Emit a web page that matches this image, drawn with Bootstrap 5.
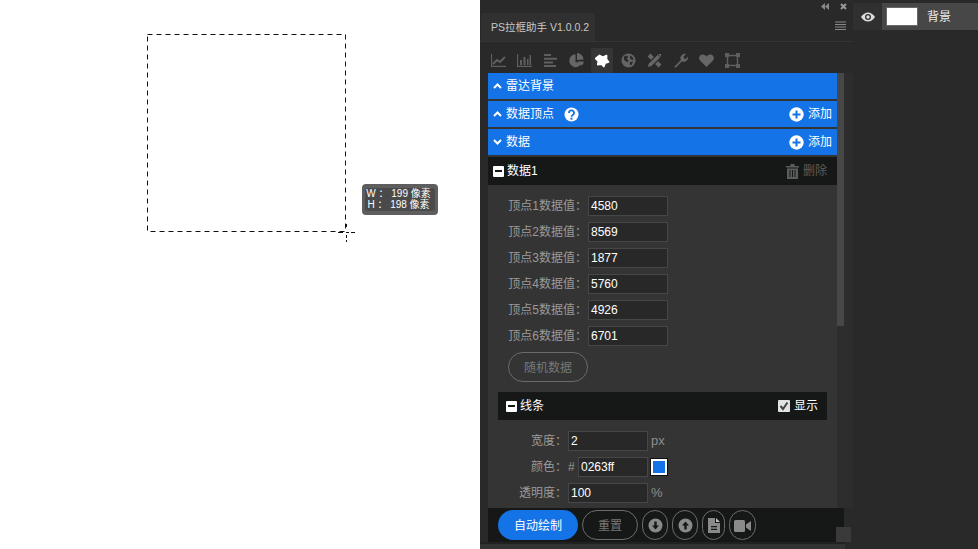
<!DOCTYPE html>
<html lang="zh">
<head>
<meta charset="utf-8">
<title>PS拉框助手</title>
<link href="https://cdn.jsdelivr.net/npm/bootstrap@5.3.0/dist/css/bootstrap.min.css" rel="stylesheet">
<style>
html,body{height:100%;margin:0;overflow:hidden}
body{font-family:"Liberation Sans","Noto Sans CJK SC",sans-serif;font-size:12px;line-height:16px;background:#fff;color:#fff}
.app{width:978px;height:549px}
.canvas-area{width:480px;height:549px;position:relative;background:#fff;flex:none}
.sel-box{position:absolute;left:147px;top:34px}
.cross-mark{position:absolute;left:337px;top:223px}
.size-tip{position:absolute;left:362px;top:184px;width:76px;height:31px;background:#5e5e5e;border-radius:4px;font-size:10px;line-height:11px;padding:4px 3px;color:#fff}
.size-tip-in{background:#4a4a4a;border-radius:3px;height:23px;white-space:pre;padding-right:3px}
.size-line{display:block;text-align:center}
.ps-panel{width:373px;height:549px;background:#292929;flex:none}
.top-strip{height:13px;padding-right:6px;gap:11px}
.tab-row{height:29px;border-bottom:1px solid #353535;padding-left:1px;padding-right:7px}
.tab-name{width:114px;height:28px;background:#303030;color:#c8c8c8;padding:6px 0 0 10px;font-size:10.5px;white-space:nowrap}
.tool-row{height:31px;padding:6px 0 0 7px;gap:4px}
.tool-cell{width:22px;height:25px}
.tool-cell.on{background:#353535}
.body-wrap{height:435px;padding-left:8px}
.scroll-pane{width:349px;height:435px;background:#343434;overflow:hidden;flex:none}
.scroll-track{width:16px;background:#2d2d2d}
.scroll-thumb{width:7px;height:253px;background:#474747}
.blue-row{height:26px;margin-bottom:2px;background:#1473e6;padding:0 5px}
.dark-row{height:28px;background:#161818;padding:0 10px 0 5px;margin-bottom:11px}
.sub-row{height:28px;width:329px;margin:10px 0 11px 10px;background:#161818;padding:0 9px 0 8px}
.minus-box{width:11px;height:11px;background:#fff;border-radius:1px;margin-right:3px;padding:0 2px}
.minus-box i{display:block;height:2px;width:100%;background:#161818}
.help-mark{margin-left:10px}
.field-row{height:20px;margin-bottom:6px;color:#9a9a9a}
.field-label{width:100px;text-align:right;flex:none;white-space:nowrap;padding-right:1px}
.field-label.narrow{width:80px}
.field-input{width:80px;height:20px;background:#282828;border:1px solid #474747;color:#fff;font-size:12px;line-height:18px;padding:0 2px;flex:none}
.field-input.short{width:70px}
.hash{width:10px;flex:none;color:#9a9a9a}
.unit{margin-left:3px;color:#8e8e8e;font-size:13px}
.swatch{width:16px;height:16px;background:#1473e6;border:2px solid #fff;outline:1px solid #111;margin-left:3px;flex:none}
.ghost-pill{border:1px solid #6b6b6b;border-radius:15px;background:transparent;color:#777;font-size:12px;line-height:1;padding:1px 0 0;display:flex;align-items:center;justify-content:center;flex:none}
.pill-random{width:80px;height:30px;margin:0 0 0 20px}
.bottom-bar{height:34px;width:356px;margin-left:8px;background:#161818;padding:2px 0 0 10px;gap:4px;flex:none}
.pill-main{width:80px;height:30px;border-radius:15px;background:#1473e6;color:#fff;font-size:12px;border:0;padding:1px 0 0}
.pill-reset{width:56px;height:30px}
.pill-round{width:26px;height:30px}
.pill-file{width:23px;height:30px}
.pill-video{width:27px;height:30px}
.foot-strip{height:2px;width:365px;background:#212121}
.foot-rest{height:5px;width:365px;background:#333}
.corner-grip{position:absolute;left:356px;top:-15px;width:15px;height:15px;background:#3a3a3a}
.foot-wrap{position:relative;height:7px}
.layers{width:125px;height:549px;background:#292929;flex:none;padding-top:3px}
.eye-cell{width:29px;height:27px;background:#303030}
.layer-main{width:96px;height:27px;background:#474747;padding-left:4px}
.layer-thumb{width:32px;height:19px;background:#fff;border:1px solid #686868;margin-right:9px}
.layer-name{font-size:12px;color:#eee}
.muted-del{color:#5c5c5c}
.ico{display:block}
</style>
</head>
<body>
<div class="app d-flex">
  <div class="canvas-area">
    <svg class="sel-box" width="200" height="199" viewBox="0 0 200 199"><rect x=".5" y=".5" width="198" height="197" fill="none" stroke="#111" stroke-dasharray="5 4"/></svg>
    <svg class="cross-mark" width="19" height="20" viewBox="0 0 19 20"><path d="M1 9.500h5M9 9.500h3M14 9.500h4" stroke="#111"/><path d="M9.500 1v4M9.500 12v7" stroke="#111" stroke-dasharray="3 2"/></svg>
    <div class="size-tip"><div class="size-tip-in"><span class="size-line">W ： 199 像素</span><span class="size-line">H ： 198 像素</span></div></div>
  </div>

  <div class="ps-panel d-flex flex-column">
    <div class="top-strip d-flex justify-content-end align-items-center">
      <svg class="ico" width="8" height="7" viewBox="0 0 8 7"><path d="M4 0v7L0 3.500zM8 0v7L4 3.500z" fill="#888"/></svg>
      <svg class="ico" width="7" height="7" viewBox="0 0 7 7"><path d="M1 1l5 5M6 1L1 6" stroke="#999" stroke-width="2"/></svg>
    </div>
    <div class="tab-row d-flex justify-content-between">
      <div class="tab-name">PS拉框助手 V1.0.0.2</div>
      <svg class="ico mt-2" width="11" height="9" viewBox="0 0 11 9"><path d="M0 1h11M0 3.500h11M0 6h11M0 8.500h11" stroke="#8a8a8a" stroke-width="1"/></svg>
    </div>
    <div class="tool-row d-flex">
      <div class="tool-cell d-flex align-items-center justify-content-center"><svg width="15" height="13" viewBox="0 0 15 13"><path d="M.5 0v12.500H15" stroke="#5f5f5f" stroke-width="1.300" fill="none"/><path d="M2 10l4-4 3 2 5-5" stroke="#5f5f5f" stroke-width="2" fill="none"/></svg></div>
      <div class="tool-cell d-flex align-items-center justify-content-center"><svg width="15" height="13" viewBox="0 0 15 13"><path d="M.5 0v12.500H15" stroke="#5f5f5f" stroke-width="1.300" fill="none"/><path d="M3 6h2v5H3zM6.500 3h2v8h-2zM10 5h1.500v6H10zM12.500 1H14v10h-1.500z" fill="#5f5f5f"/></svg></div>
      <div class="tool-cell d-flex align-items-center justify-content-center"><svg width="13" height="13" viewBox="0 0 13 13"><path d="M0 0h7v2H0zM0 3.700h13v2H0zM0 7.400h9v2H0zM0 11h12v2H0z" fill="#5f5f5f"/></svg></div>
      <div class="tool-cell d-flex align-items-center justify-content-center"><svg width="15" height="15" viewBox="0 0 15 15"><path d="M6.500 1.200a6.500 6.500 0 1 0 6.600 8H6.500z" fill="#666"/><path d="M8 0a6.500 6.500 0 0 1 6.500 6.500L8 7z" fill="#666"/><path d="M8.500 8.500l6.300 0a6 6 0 0 1-2 4z" fill="#666"/></svg></div>
      <div class="tool-cell on d-flex align-items-center justify-content-center"><svg width="16" height="16" viewBox="0 0 16 16"><path d="M5.500 2.500L8.800 4.300 12.500 2.700 12.400 6.300 14.500 9 11 10.100 9.800 13.500 7.400 11 3.800 11.600 4.400 8.100 1.800 5.500z" fill="#fff" stroke="#fff" stroke-width="1.800" stroke-linejoin="round"/></svg></div>
      <div class="tool-cell d-flex align-items-center justify-content-center"><svg width="15" height="15" viewBox="0 0 15 15"><circle cx="7.500" cy="7.500" r="7" fill="#646464"/><path d="M3 3.500l3-1 1 1.500-1 2 1.500 1.500-1 2-1-1L3 7zM9 2.500l2.500 1.500 1 3-2.500-.5-1-1.500zM9 9l3-.5-1.500 3.500L9 12z" fill="#2a2a2a"/></svg></div>
      <div class="tool-cell d-flex align-items-center justify-content-center"><svg width="15" height="15" viewBox="0 0 15 15"><path d="M2 2l11 11" stroke="#666" stroke-width="4"/><path d="M2.500 12.500L12 3" stroke="#292929" stroke-width="6"/><path d="M2.500 12.500L12 3" stroke="#666" stroke-width="3.500"/><path d="M1 14l.5-3 2 2zM11 1h3v3z" fill="#666"/></svg></div>
      <div class="tool-cell d-flex align-items-center justify-content-center"><svg width="15" height="15" viewBox="0 0 15 15"><path d="M1 14l7-7a4 4 0 0 1 1-5c1.300-1.200 2.800-1.500 4-1l-2.500 2.500.5 2 2 .5L15 3.500c.3 1.500-.2 3-1.300 4a4 4 0 0 1-4.700.8L3 14.500z" fill="#666"/></svg></div>
      <div class="tool-cell d-flex align-items-center justify-content-center"><svg width="15" height="13" viewBox="0 0 15 13"><path d="M7.500 13L1 6.500C-1 4 .5.500 3.800.500c1.700 0 3 1 3.700 2.200C8.200 1.500 9.500.500 11.200.500 14.500.500 16 4 14 6.500z" fill="#666"/></svg></div>
      <div class="tool-cell d-flex align-items-center justify-content-center"><svg width="15" height="15" viewBox="0 0 15 15"><path d="M2.500 2.500h10v10h-10z" fill="none" stroke="#5f5f5f" stroke-width="1.500"/><path d="M0 0h4v4H0zM11 0h4v4h-4zM0 11h4v4H0zM11 11h4v4h-4z" fill="#5f5f5f"/></svg></div>
    </div>

    <div class="body-wrap d-flex">
      <div class="scroll-pane">
        <div class="blue-row d-flex align-items-center">
          <svg class="me-1" width="9" height="6" viewBox="0 0 9 6"><path d="M1 5l3.500-3.500L8 5" stroke="#fff" stroke-width="2" fill="none"/></svg><span>雷达背景</span>
        </div>
        <div class="blue-row d-flex align-items-center">
          <svg class="me-1" width="9" height="6" viewBox="0 0 9 6"><path d="M1 5l3.500-3.500L8 5" stroke="#fff" stroke-width="2" fill="none"/></svg><span>数据顶点</span>
          <svg class="help-mark" width="15" height="15" viewBox="0 0 15 15"><circle cx="7.500" cy="7.500" r="7" fill="#fff"/><path d="M5 6a2.500 2.500 0 1 1 3.800 2c-.8.500-1.300.8-1.300 1.700" stroke="#1473e6" stroke-width="1.800" fill="none"/><path d="M6.500 10.700h2v2h-2z" fill="#1473e6"/></svg>
          <span class="ms-auto d-flex align-items-center"><svg class="me-1" width="15" height="15" viewBox="0 0 15 15"><circle cx="7.500" cy="7.500" r="7.200" fill="#fff"/><path d="M3.500 6.500h8v2h-8zM6.500 3.500h2v8h-2z" fill="#1473e6"/></svg>添加</span>
        </div>
        <div class="blue-row d-flex align-items-center">
          <svg class="me-1" width="9" height="6" viewBox="0 0 9 6"><path d="M1 1l3.500 3.500L8 1" stroke="#fff" stroke-width="2" fill="none"/></svg><span>数据</span>
          <span class="ms-auto d-flex align-items-center"><svg class="me-1" width="15" height="15" viewBox="0 0 15 15"><circle cx="7.500" cy="7.500" r="7.200" fill="#fff"/><path d="M3.500 6.500h8v2h-8zM6.500 3.500h2v8h-2z" fill="#1473e6"/></svg>添加</span>
        </div>
        <div class="dark-row d-flex align-items-center">
          <div class="minus-box d-flex align-items-center"><i></i></div><span>数据1</span>
          <span class="ms-auto d-flex align-items-center"><svg class="me-1" width="13" height="15" viewBox="0 0 13 15"><path d="M0 2h13v1.500H0zM4.500 0h4v2h-4zM1 4.500h11V15H1z" fill="#5c5c5c"/><path d="M4 6v7M6.500 6v7M9 6v7" stroke="#161818"/></svg><span class="muted-del">删除</span></span>
        </div>
        <div class="field-row d-flex align-items-center"><div class="field-label">顶点1数据值：</div><div class="field-input">4580</div></div>
        <div class="field-row d-flex align-items-center"><div class="field-label">顶点2数据值：</div><div class="field-input">8569</div></div>
        <div class="field-row d-flex align-items-center"><div class="field-label">顶点3数据值：</div><div class="field-input">1877</div></div>
        <div class="field-row d-flex align-items-center"><div class="field-label">顶点4数据值：</div><div class="field-input">5760</div></div>
        <div class="field-row d-flex align-items-center"><div class="field-label">顶点5数据值：</div><div class="field-input">4926</div></div>
        <div class="field-row d-flex align-items-center"><div class="field-label">顶点6数据值：</div><div class="field-input">6701</div></div>
        <button class="ghost-pill pill-random" type="button">随机数据</button>
        <div class="sub-row d-flex align-items-center">
          <div class="minus-box d-flex align-items-center"><i></i></div><span>线条</span>
          <span class="ms-auto d-flex align-items-center"><svg class="me-1" width="12" height="12" viewBox="0 0 12 12"><rect width="12" height="12" rx="1" fill="#e2e2e2"/><path d="M2.500 6l2.500 3 4.500-6.500" stroke="#444" stroke-width="2" fill="none"/></svg>显示</span>
        </div>
        <div class="field-row d-flex align-items-center"><div class="field-label narrow">宽度：</div><div class="field-input">2</div><span class="unit">px</span></div>
        <div class="field-row d-flex align-items-center"><div class="field-label narrow">颜色：</div><span class="hash">#</span><div class="field-input short">0263ff</div><div class="swatch"></div></div>
        <div class="field-row d-flex align-items-center"><div class="field-label narrow">透明度：</div><div class="field-input">100</div><span class="unit">%</span></div>
      </div>
      <div class="scroll-track"><div class="scroll-thumb"></div></div>
    </div>

    <div class="bottom-bar d-flex">
      <button class="pill-main" type="button">自动绘制</button>
      <button class="ghost-pill pill-reset" type="button">重置</button>
      <button class="ghost-pill pill-round" type="button"><svg width="15" height="15" viewBox="0 0 15 15"><circle cx="7.500" cy="7.500" r="7" fill="#8a8a8a"/><path d="M6.300 3.500h2.400v4h2.300l-3.500 4-3.500-4h2.300z" fill="#161818"/></svg></button>
      <button class="ghost-pill pill-round" type="button"><svg width="15" height="15" viewBox="0 0 15 15"><circle cx="7.500" cy="7.500" r="7" fill="#8a8a8a"/><path d="M6.300 11.500h2.400v-4h2.300l-3.500-4-3.500 4h2.300z" fill="#161818"/></svg></button>
      <button class="ghost-pill pill-file" type="button"><svg width="12" height="15" viewBox="0 0 12 15"><path d="M0 0h7v5h5v10H0z" fill="#8a8a8a"/><path d="M8 0l4 4H8z" fill="#bbb"/><path d="M3 8h6v1.300H3zM3 10.700h6V12H3z" fill="#161818"/></svg></button>
      <button class="ghost-pill pill-video" type="button"><svg width="17" height="12" viewBox="0 0 17 12"><rect width="11" height="12" rx="1.500" fill="#8a8a8a"/><path d="M12 4.500L17 1v10l-5-3.500z" fill="#8a8a8a"/></svg></button>
    </div>
    <div class="foot-wrap">
      <div class="corner-grip"></div>
      <div class="foot-strip"></div>
      <div class="foot-rest"></div>
    </div>
  </div>

  <div class="layers">
    <div class="d-flex">
      <div class="eye-cell d-flex align-items-center justify-content-center"><svg width="14" height="10" viewBox="0 0 14 10"><path d="M0 5c2-3 4.500-4.500 7-4.500S12 2 14 5c-2 3-4.500 4.500-7 4.500S2 8 0 5z" fill="#ddd"/><circle cx="7" cy="5" r="3" fill="#303030"/><circle cx="7" cy="5" r="1.700" fill="#ddd"/></svg></div>
      <div class="layer-main d-flex align-items-center"><div class="layer-thumb"></div><span class="layer-name">背景</span></div>
    </div>
  </div>
</div>
</body>
</html>
